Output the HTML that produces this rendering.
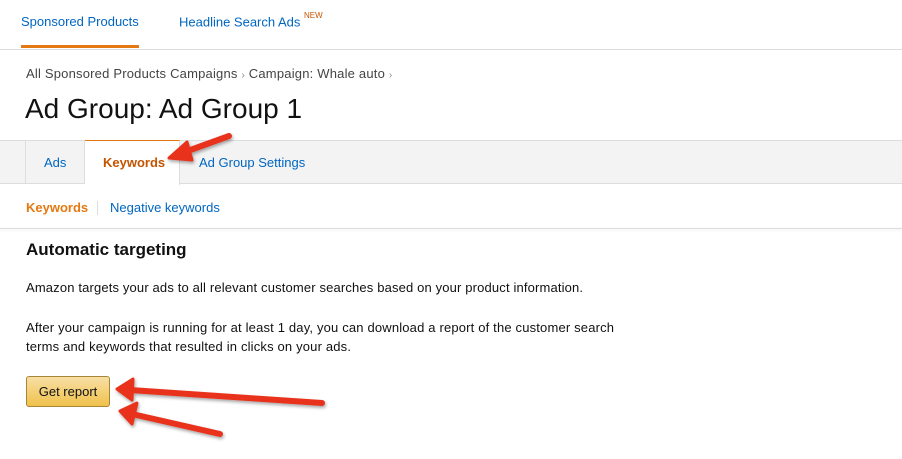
<!DOCTYPE html>
<html><head><meta charset="utf-8"><style>
*{margin:0;padding:0;box-sizing:border-box}
body{width:902px;height:459px;overflow:hidden;background:#fff;font-family:"Liberation Sans",Arial,sans-serif;position:relative;color:#111}
.a{position:absolute;white-space:nowrap}
.blue{color:#0066c0}
</style></head><body>
<div class="a blue" style="left:21px;top:14px;font-size:13px">Sponsored Products</div>
<div style="position:absolute;left:21px;top:45px;width:118px;height:3px;background:#e47911"></div>
<div class="a blue" style="left:179px;top:14px;font-size:13px">Headline Search Ads <sup style="color:#c45500;font-size:8px;position:relative;top:-3px">NEW</sup></div>
<div style="position:absolute;left:0;top:49px;width:902px;height:1px;background:#ddd"></div>
<div class="a" style="left:26px;top:66px;font-size:13px;color:#444;letter-spacing:.2px">All Sponsored Products Campaigns <span style="color:#888;font-size:10px">›</span> Campaign: Whale auto <span style="color:#888;font-size:10px">›</span></div>
<div class="a" style="left:25px;top:93px;font-size:28px;color:#111">Ad Group: Ad Group 1</div>
<div style="position:absolute;left:0;top:140px;width:902px;height:44px;background:#f3f3f3;border-top:1px solid #ddd;border-bottom:1px solid #ddd"></div>
<div style="position:absolute;left:25px;top:140px;width:60px;height:44px;border:1px solid #ddd;border-bottom:none"></div>
<div class="a blue" style="left:44px;top:155px;font-size:13px">Ads</div>
<div style="position:absolute;left:85px;top:140px;width:95px;height:45px;background:#fff;border-top:1px solid #e47911;border-right:1px solid #ddd"></div>
<div class="a" style="left:103px;top:155px;font-size:13px;font-weight:bold;color:#c45500">Keywords</div>
<div class="a blue" style="left:199px;top:155px;font-size:13px">Ad Group Settings</div>
<div class="a" style="left:26px;top:200px;font-size:13px;font-weight:bold;color:#e47911">Keywords</div>
<div style="position:absolute;left:97px;top:201px;width:1px;height:14px;background:#ddd"></div>
<div class="a blue" style="left:110px;top:200px;font-size:13px">Negative keywords</div>
<div style="position:absolute;left:0;top:228px;width:902px;height:1px;background:#ddd;box-shadow:0 1px 3px rgba(0,0,0,.12)"></div>
<div class="a" style="left:26px;top:240px;font-size:17px;font-weight:bold">Automatic targeting</div>
<div class="a" style="left:26px;top:280px;font-size:13px;letter-spacing:.15px">Amazon targets your ads to all relevant customer searches based on your product information.</div>
<div class="a" style="left:26px;top:318px;font-size:13px;line-height:19px;letter-spacing:.17px">After your campaign is running for at least 1 day, you can download a report of the customer search<br>terms and keywords that resulted in clicks on your ads.</div>
<div style="position:absolute;left:26px;top:376px;width:84px;height:31px;border:1px solid #a88734;border-radius:3px;background:linear-gradient(#f7dfa5,#f0c14b);font-size:13px;text-align:center;line-height:29px">Get report</div>
<svg style="position:absolute;left:0;top:0" width="902" height="459">
<defs><filter id="s"><feDropShadow dx="1" dy="2" stdDeviation="1.5" flood-opacity=".35"/></filter></defs>
<g fill="#e8331c" stroke="#e8331c" stroke-linecap="round" stroke-linejoin="round" filter="url(#s)">
<line x1="229" y1="136" x2="182" y2="153" stroke-width="6"/>
<polygon points="169,158 187,142 192,160" stroke-width="3"/>
<line x1="322" y1="403" x2="130" y2="390" stroke-width="6"/>
<polygon points="117,389 133,379 132,400" stroke-width="3"/>
<line x1="220" y1="434" x2="132" y2="414" stroke-width="6"/>
<polygon points="120,411 137,403 132,424" stroke-width="3"/>
</g></svg>
</body></html>
